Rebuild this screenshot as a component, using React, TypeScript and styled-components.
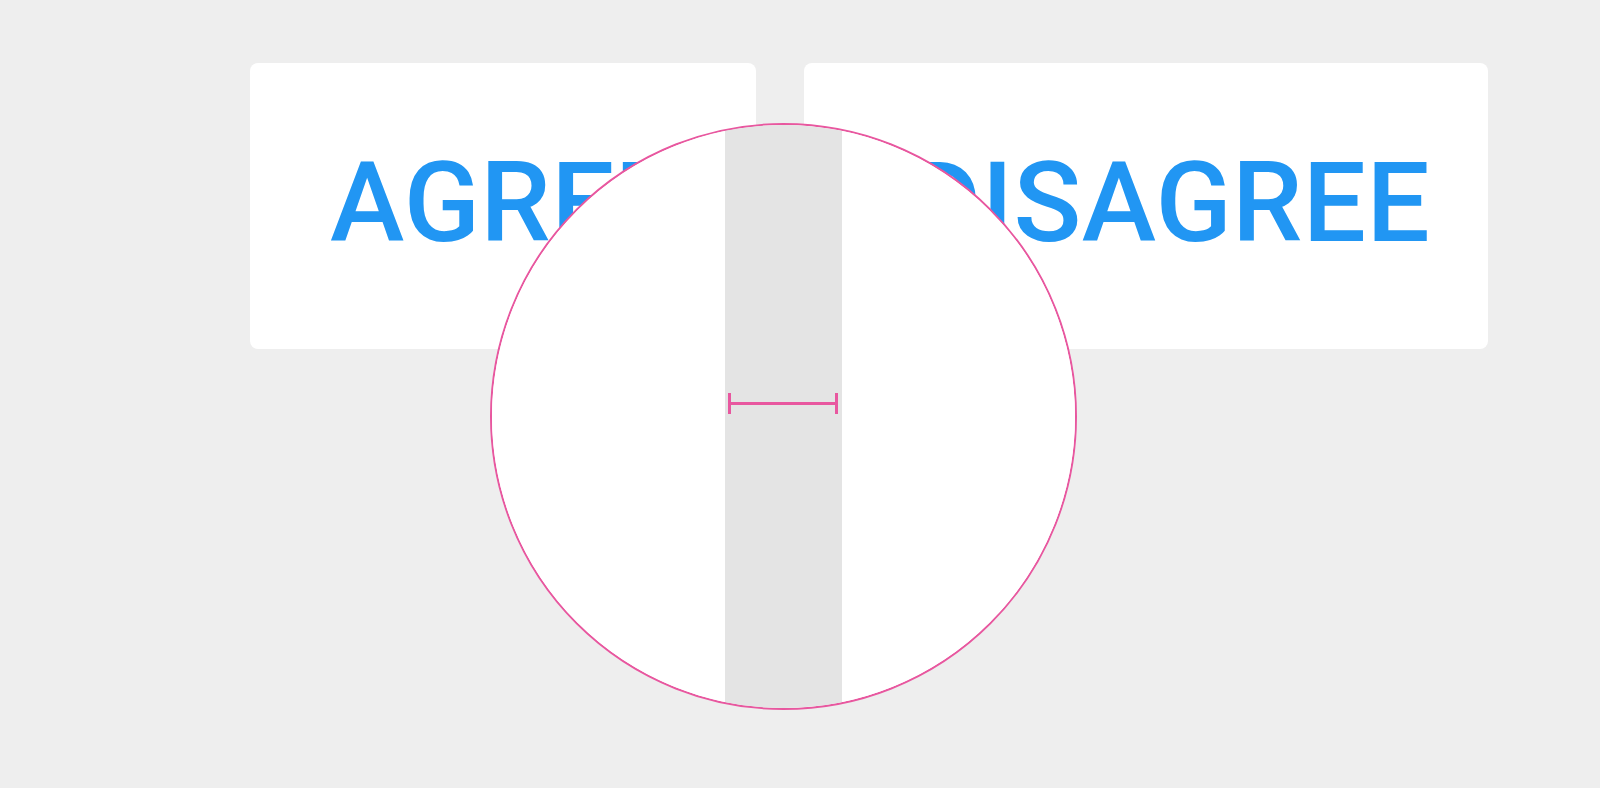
import styled, { createGlobalStyle } from 'styled-components';

const GlobalStyle = createGlobalStyle`
  html, body {
    margin: 0;
    padding: 0;
    background: #eeeeee;
  }
`;

const PINK = '#e8579f';

export default function App() {
  return (
    <>
      <GlobalStyle />
      <Page>
        <ButtonRow>
          <Card $width={506} $align="flex-start" $padLeft={80}>
            <Label>AGREE</Label>
          </Card>
          <Card $width={684} $align="flex-end" $padRight={58}>
            <Label>DISAGREE</Label>
          </Card>
        </ButtonRow>

        <Magnifier>
          <Side $width={233} />
          <Gap>
            <Measure />
          </Gap>
          <Side />
        </Magnifier>
      </Page>
    </>
  );
}

const Page = styled.main`
  position: relative;
  box-sizing: border-box;
  width: 100%;
  height: 788px;
  padding: 63px 0 0 250px;
  background: #eeeeee;
  overflow: hidden;
`;

const ButtonRow = styled.div`
  display: flex;
  gap: 48px;
`;

const Card = styled.div<{
  $width: number;
  $align: string;
  $padLeft?: number;
  $padRight?: number;
}>`
  box-sizing: border-box;
  display: flex;
  justify-content: ${(p) => p.$align};
  width: ${(p) => p.$width}px;
  height: 286px;
  padding: 84px ${(p) => p.$padRight ?? 0}px 0 ${(p) => p.$padLeft ?? 0}px;
  background: #ffffff;
  border-radius: 8px;
`;

const Label = styled.span`
  font-family: Roboto, 'Liberation Sans', sans-serif;
  font-weight: 500;
  font-size: 112px;
  line-height: 112px;
  letter-spacing: 0.3px;
  color: #2196f3;
  white-space: nowrap;
`;

const Magnifier = styled.div`
  position: absolute;
  left: 490px;
  top: 123px;
  box-sizing: border-box;
  display: flex;
  width: 587px;
  height: 587px;
  border: 2px solid ${PINK};
  border-radius: 50%;
  background: #ffffff;
  overflow: hidden;
`;

const Side = styled.div<{ $width?: number }>`
  flex: ${(p) => (p.$width ? `0 0 ${p.$width}px` : '1')};
  background: #ffffff;
`;

const Gap = styled.div`
  position: relative;
  flex: 0 0 117px;
  background: #e4e4e4;
`;

const Measure = styled.div`
  position: absolute;
  left: 3px;
  right: 4px;
  top: 277px;
  height: 3px;
  background: ${PINK};

  &::before,
  &::after {
    content: '';
    position: absolute;
    top: -9px;
    width: 3px;
    height: 21px;
    background: ${PINK};
  }

  &::before {
    left: 0;
  }

  &::after {
    right: 0;
  }
`;
